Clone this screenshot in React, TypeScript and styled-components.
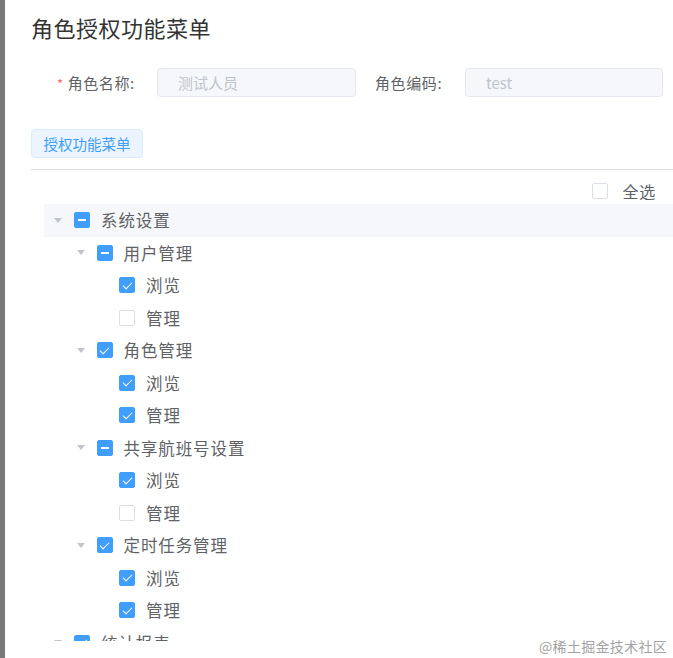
import React from "react";
import styled, { createGlobalStyle } from "styled-components";

const Global = createGlobalStyle`
  html, body { margin: 0; padding: 0; background: #fff; }
  body {
    width: 673px; height: 658px; overflow: hidden;
    font-family: "Noto Sans CJK SC", "Noto Sans", "Liberation Sans", sans-serif;
    color: #606266;
  }
  * { box-sizing: border-box; }
`;

const Page = styled.div`
  position: relative;
  display: flex;
  height: 658px;
  width: 673px;
  overflow: hidden;
`;

const SideBar = styled.div`
  width: 5px;
  flex: none;
  background: #787878;
`;

const Main = styled.div`
  flex: 1;
  min-width: 0;
  padding-left: 26px;
  display: flex;
  flex-direction: column;
`;

const Title = styled.h2`
  margin: 12px 0 0;
  font-size: 22px;
  line-height: 30px;
  font-weight: 400;
  letter-spacing: 0.5px;
  color: #333;
`;

const FormRow = styled.div`
  display: flex;
  align-items: center;
  margin-top: 26px;
  height: 29px;
`;

const Label = styled.label<{ $width: number; $gap?: number }>`
  width: ${(p) => p.$width}px;
  margin-left: ${(p) => p.$gap ?? 0}px;
  flex: none;
  padding-right: 23px;
  text-align: right;
  font-size: 15px;
  letter-spacing: 0.6px;
  color: #606266;
  white-space: nowrap;
`;

const Star = styled.span`
  color: #f56c6c;
  margin-right: 4px;
  font-size: 13px;
`;

const Input = styled.div<{ $width: number }>`
  width: ${(p) => p.$width}px;
  height: 29px;
  flex: none;
  display: flex;
  align-items: center;
  padding-left: 20px;
  background: #f5f7fa;
  border: 1px solid #e4e7ed;
  border-radius: 4px;
  color: #c0c4cc;
  font-size: 15px;
`;

const PlainButton = styled.button`
  align-self: flex-start;
  margin-top: 32px;
  height: 29px;
  width: 112px;
  padding: 0;
  background: #ecf5ff;
  border: 1px solid #d9ecff;
  border-radius: 4px;
  color: #409eff;
  font-family: inherit;
  font-size: 14.5px;
  cursor: pointer;
`;

const Divider = styled.div`
  margin-top: 11px;
  height: 1px;
  background: #dcdfe6;
`;

const SelectAllRow = styled.div`
  height: 33px;
  padding-top: 8px;
  padding-right: 17px;
  display: flex;
  align-items: center;
  justify-content: flex-end;
  gap: 14px;
  font-size: 16px;
  letter-spacing: 0.8px;
  color: #606266;
`;

const TreeBox = styled.div`
  margin-left: 13px;
  padding-top: 1px;
  height: 438px;
  overflow: hidden;
`;

const Row = styled.div<{ $level: number; $active?: boolean }>`
  height: 32.5px;
  display: flex;
  align-items: center;
  padding-left: ${(p) => 2 + p.$level * 22.5}px;
  background: ${(p) => (p.$active ? "#f5f7fa" : "transparent")};
`;

const Caret = styled.span<{ $hidden?: boolean }>`
  width: 24px;
  height: 24px;
  flex: none;
  display: flex;
  align-items: center;
  justify-content: center;
  &::before {
    content: "";
    display: ${(p) => (p.$hidden ? "none" : "block")};
    width: 0;
    height: 0;
    border-left: 4.5px solid transparent;
    border-right: 4.5px solid transparent;
    border-top: 5px solid #c0c4cc;
  }
`;

type CheckState = "checked" | "unchecked" | "half";

const Box = styled.span<{ $state: CheckState; $gap?: number }>`
  position: relative;
  width: 16px;
  height: 16px;
  flex: none;
  margin-left: ${(p) => p.$gap ?? 0}px;
  border-radius: 2px;
  border: 1px solid ${(p) => (p.$state === "unchecked" ? "#dcdfe6" : "#409eff")};
  background: ${(p) => (p.$state === "unchecked" ? "#fff" : "#409eff")};
  &::after {
    content: "";
    position: absolute;
    display: ${(p) => (p.$state === "unchecked" ? "none" : "block")};
    ${(p) =>
      p.$state === "half"
        ? `left: 3px; right: 3px; top: 6px; height: 2px; background: #fff;`
        : `left: 4.5px; top: 1.5px; width: 4px; height: 8px;
           border: 1.2px solid #fff; border-left: 0; border-top: 0;
           transform: rotate(45deg);`}
  }
`;

const NodeText = styled.span`
  margin-left: 11px;
  font-size: 16.5px;
  letter-spacing: 0.9px;
  color: #606266;
  white-space: nowrap;
`;

const Watermark = styled.div`
  position: absolute;
  right: 6px;
  bottom: 2px;
  font-size: 14px;
  color: #a3a3a3;
  background: #fff;
  letter-spacing: 0.3px;
`;

type Node = { label: string; state: CheckState; children?: Node[] };

const tree: Node[] = [
  {
    label: "系统设置",
    state: "half",
    children: [
      {
        label: "用户管理",
        state: "half",
        children: [
          { label: "浏览", state: "checked" },
          { label: "管理", state: "unchecked" },
        ],
      },
      {
        label: "角色管理",
        state: "checked",
        children: [
          { label: "浏览", state: "checked" },
          { label: "管理", state: "checked" },
        ],
      },
      {
        label: "共享航班号设置",
        state: "half",
        children: [
          { label: "浏览", state: "checked" },
          { label: "管理", state: "unchecked" },
        ],
      },
      {
        label: "定时任务管理",
        state: "checked",
        children: [
          { label: "浏览", state: "checked" },
          { label: "管理", state: "checked" },
        ],
      },
    ],
  },
  {
    label: "统计报表",
    state: "checked",
    children: [
      { label: "浏览", state: "checked" },
      { label: "管理", state: "checked" },
    ],
  },
];

let rowIndex = 0;

function TreeNode({ node, level }: { node: Node; level: number }) {
  const active = rowIndex++ === 0;
  return (
    <>
      <Row $level={level} $active={active}>
        <Caret $hidden={!node.children} />
        <Box $state={node.state} $gap={4} />
        <NodeText>{node.label}</NodeText>
      </Row>
      {node.children?.map((c, i) => (
        <TreeNode key={i} node={c} level={level + 1} />
      ))}
    </>
  );
}

export default function App() {
  rowIndex = 0;
  return (
    <>
      <Global />
      <Page>
        <SideBar />
        <Main>
          <Title>角色授权功能菜单</Title>
          <FormRow>
            <Label $width={100} $gap={26}>
              <Star>*</Star>角色名称:
            </Label>
            <Input $width={199}>测试人员</Input>
            <Label $width={90} $gap={19}>
              角色编码:
            </Label>
            <Input $width={198}>test</Input>
          </FormRow>
          <PlainButton>授权功能菜单</PlainButton>
          <Divider />
          <SelectAllRow>
            <Box $state="unchecked" />
            <span>全选</span>
          </SelectAllRow>
          <TreeBox>
            {tree.map((n, i) => (
              <TreeNode key={i} node={n} level={0} />
            ))}
          </TreeBox>
        </Main>
        <Watermark>@稀土掘金技术社区</Watermark>
      </Page>
    </>
  );
}
